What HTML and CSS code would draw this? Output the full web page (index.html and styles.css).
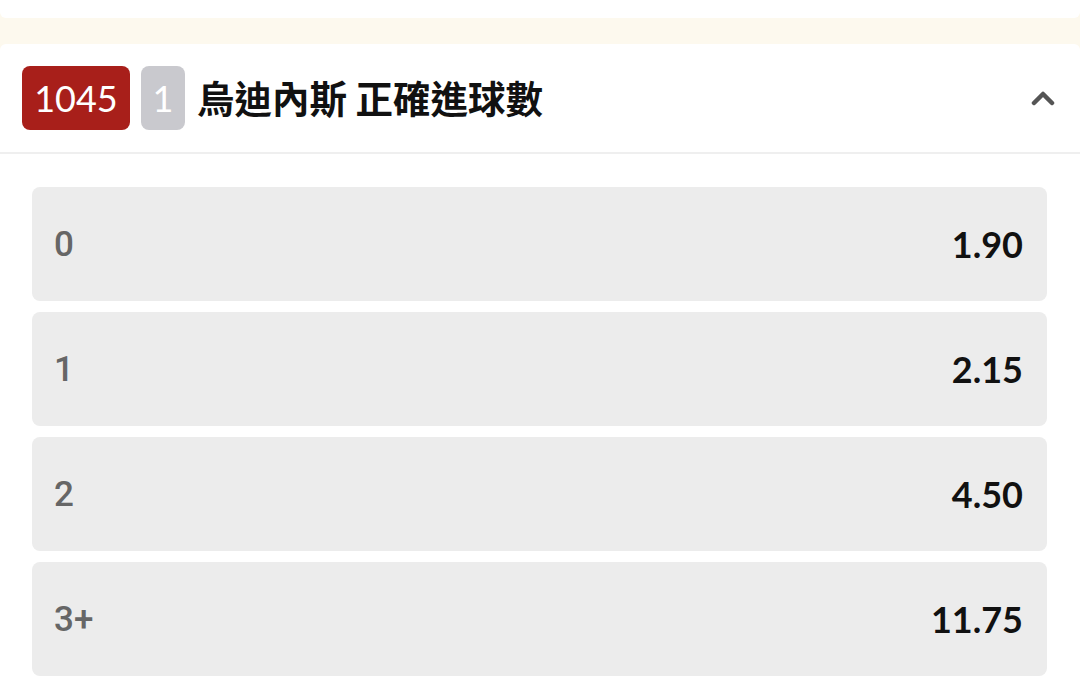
FILE: index.html
```html
<!DOCTYPE html>
<html lang="zh-Hant">
<head>
<meta charset="utf-8">
<link rel="stylesheet" href="styles.css">
</head>
<body>
<div class="page">
  <div class="prev-card"></div>
  <div class="spacer"></div>
  <section class="market">
    <header class="market-head">
      <span class="badge badge-id">1045</span>
      <span class="badge badge-num">1</span>
      <h2 class="title">烏迪內斯 正確進球數</h2>
      <svg class="chevron" width="24" height="16" viewBox="0 0 24 16" aria-hidden="true">
        <path d="M3 13 L12 4 L21 13" fill="none" stroke="#555" stroke-width="4.5" stroke-linecap="round" stroke-linejoin="round"/>
      </svg>
    </header>
    <div class="options">
      <div class="option"><span class="label">0</span><span class="odds">1.90</span></div>
      <div class="option"><span class="label">1</span><span class="odds">2.15</span></div>
      <div class="option"><span class="label">2</span><span class="odds">4.50</span></div>
      <div class="option"><span class="label">3+</span><span class="odds">11.75</span></div>
    </div>
  </section>
</div>
</body>
</html>
```

FILE: styles.css
```css
html, body {
  margin: 0;
  padding: 0;
  background: #ffffff;
}

.page {
  background: #fdf9ee;
  min-height: 689px;
  display: flex;
  flex-direction: column;
  font-family: Lato, "Noto Sans CJK TC", sans-serif;
}

.prev-card {
  height: 18px;
  background: #ffffff;
  border-radius: 0 0 6px 6px;
}

.spacer {
  height: 26px;
}

.market {
  background: #ffffff;
  flex: 1;
  border-radius: 6px 6px 0 0;
}

.market-head {
  display: flex;
  align-items: center;
  gap: 11px;
  padding: 22px 25px 22px 22px;
  border-bottom: 2px solid #efefef;
}

.badge {
  height: 64px;
  border-radius: 8px;
  color: #ffffff;
  font-family: Lato, sans-serif;
  font-size: 36px;
  font-weight: 400;
  display: flex;
  align-items: center;
  justify-content: center;
  box-sizing: border-box;
}

.badge-id {
  background: #a81f1a;
  width: 108px;
}

.badge-num {
  background: #c9c9ce;
  width: 44px;
}

.title {
  margin: -2px 0 0 1px;
  flex: 1;
  font-family: "Noto Sans CJK TC", sans-serif;
  font-size: 37.5px;
  font-weight: 700;
  color: #111111;
  line-height: 1;
}

.chevron {
  display: block;
}

.options {
  display: flex;
  flex-direction: column;
  gap: 11px;
  padding: 33px 33px 12px 32px;
}

.option {
  height: 114px;
  background: #ececec;
  border-radius: 8px;
  display: flex;
  align-items: center;
  justify-content: space-between;
  padding: 0 24px 0 22px;
}

.label {
  font-family: Roboto, sans-serif;
  font-weight: 500;
  font-size: 35px;
  color: #666666;
}

.odds {
  font-family: Lato, sans-serif;
  font-weight: 700;
  font-size: 36px;
  color: #111111;
}
```
